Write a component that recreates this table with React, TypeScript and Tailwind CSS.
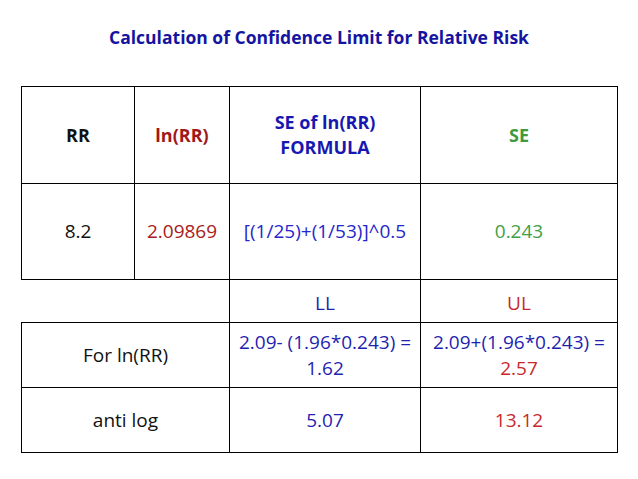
import React from "react";

const font = { fontFamily: '"Open Sans", "Noto Sans", sans-serif' };

export default function App() {
  return (
    <div className="w-[638px] h-[479px] bg-white overflow-hidden" style={font}>
      <h1 className="pt-[25px] text-center text-[17.5px] leading-[24px] font-bold text-[#1414a0]">
        Calculation of Confidence Limit for Relative Risk
      </h1>

      <table className="mt-[37px] ml-[21px] w-[596px] table-fixed border-collapse text-center text-[19px] text-[#111]">
        <colgroup>
          <col className="w-[113px]" />
          <col className="w-[95px]" />
          <col className="w-[191px]" />
          <col className="w-[197px]" />
        </colgroup>
        <tbody>
          <tr className="h-[97px] font-bold text-[18px] leading-[25px]">
            <td className="border border-black">RR</td>
            <td className="border border-black text-[#a01818]">ln(RR)</td>
            <td className="border border-black text-[#1818b0]">
              <div>SE of ln(RR)</div>
              <div>FORMULA</div>
            </td>
            <td className="border border-black text-[#3d9a3d]">SE</td>
          </tr>
          <tr className="h-[96px]">
            <td className="border border-black">8.2</td>
            <td className="border border-black text-[#a82020]">2.09869</td>
            <td className="border border-black text-[#2626cc] whitespace-nowrap">
              [(1/25)+(1/53)]^0.5
            </td>
            <td className="border border-black text-[#3f9f45]">0.243</td>
          </tr>
          <tr className="h-[43px]">
            <td colSpan={2} className="border-y border-black border-l-0"></td>
            <td className="border border-black pt-1 text-[#1f1fb0]">LL</td>
            <td className="border border-black pt-1 text-[#c8282c]">UL</td>
          </tr>
          <tr className="h-[65px] leading-[26px]">
            <td colSpan={2} className="border border-black">For ln(RR)</td>
            <td className="border border-black text-[#1f1fb0] whitespace-nowrap">
              <div>2.09- (1.96*0.243) =</div>
              <div>1.62</div>
            </td>
            <td className="border border-black text-[#1f1fb0] whitespace-nowrap">
              <div>2.09+(1.96*0.243) =</div>
              <div className="text-[#c8282c]">2.57</div>
            </td>
          </tr>
          <tr className="h-[65px]">
            <td colSpan={2} className="border border-black">anti log</td>
            <td className="border border-black text-[#1f1fb0]">5.07</td>
            <td className="border border-black text-[#c8282c]">13.12</td>
          </tr>
        </tbody>
      </table>
    </div>
  );
}
